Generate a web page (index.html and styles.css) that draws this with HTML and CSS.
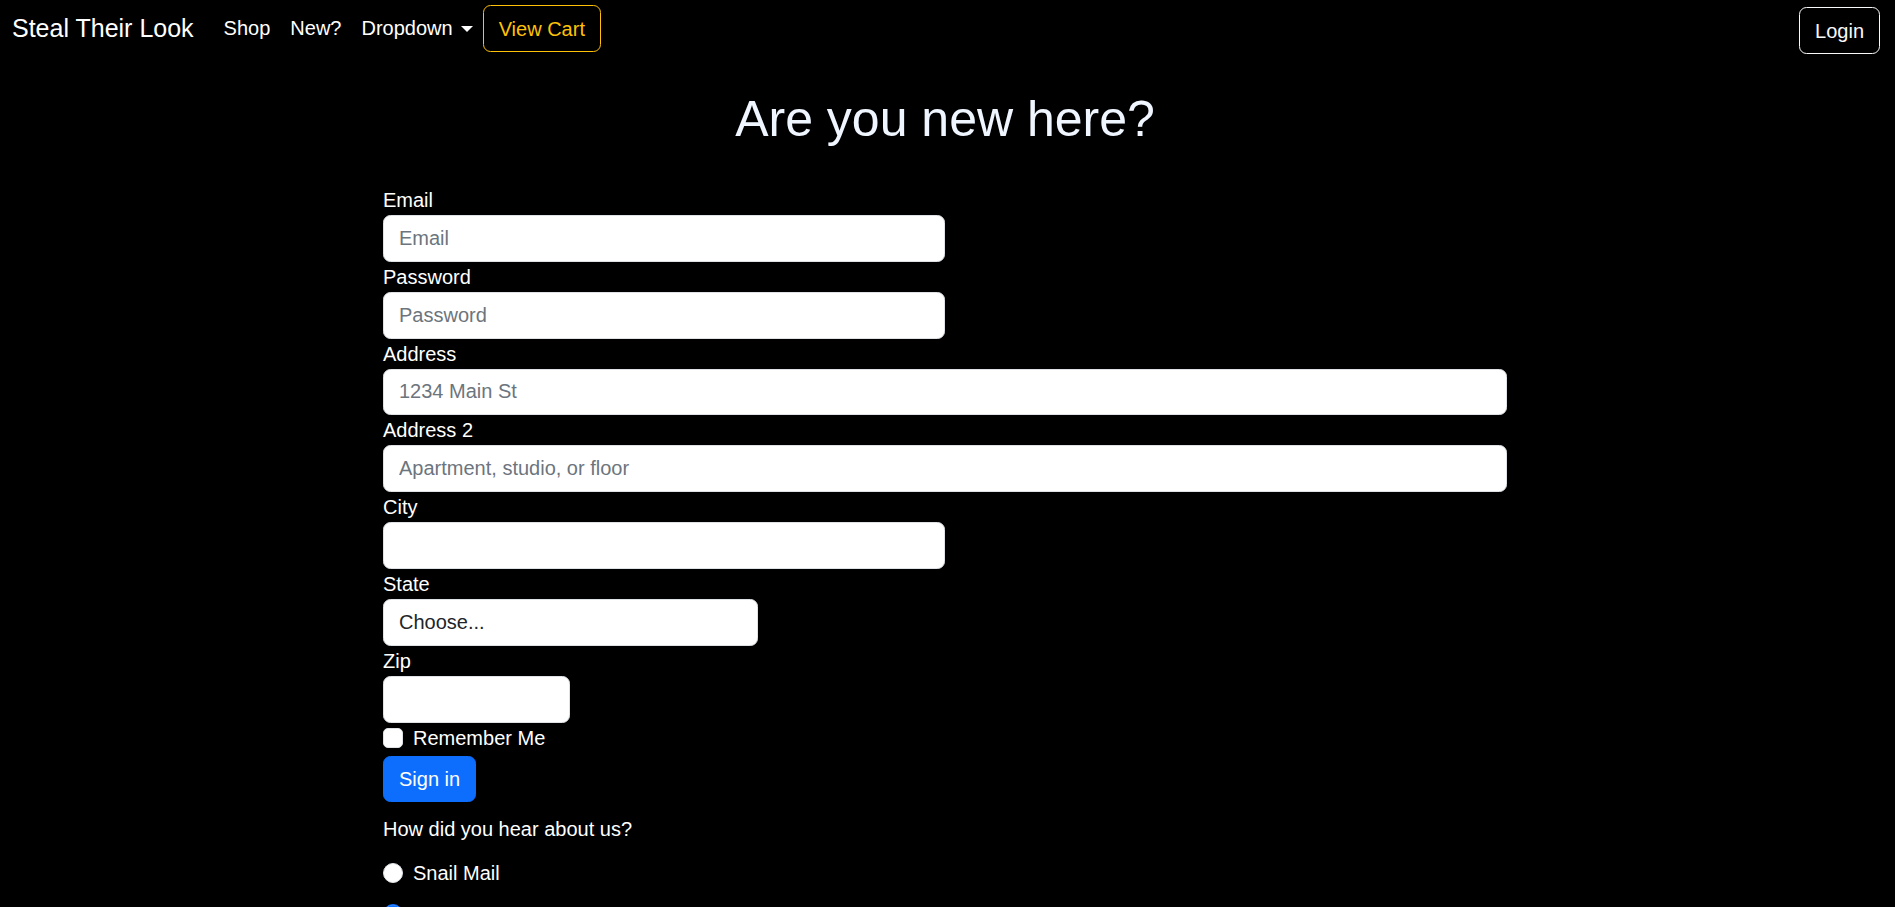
FILE: index.html
```html
<!DOCTYPE html>
<html lang="en">
<head>
<meta charset="utf-8">
<title>Steal Their Look</title>
<link rel="stylesheet" href="styles.css">
</head>
<body>
<nav class="navbar">
  <a class="brand" href="#">Steal Their Look</a>
  <ul class="nav">
    <li><a class="nav-link" href="#">Shop</a></li>
    <li><a class="nav-link" href="#">New?</a></li>
    <li><a class="nav-link dropdown" href="#">Dropdown<span class="caret"></span></a></li>
    <li><button class="btn btn-cart" type="button">View Cart</button></li>
  </ul>
  <button class="btn btn-login" type="button">Login</button>
</nav>

<main class="page">
  <h1 class="title">Are you new here?</h1>
  <form class="form">
    <div class="field w-half">
      <label class="label" for="email">Email</label>
      <input class="control" id="email" type="email" placeholder="Email">
    </div>
    <div class="field w-half">
      <label class="label" for="pw">Password</label>
      <input class="control" id="pw" type="password" placeholder="Password">
    </div>
    <div class="field w-full">
      <label class="label" for="addr">Address</label>
      <input class="control" id="addr" type="text" placeholder="1234 Main St">
    </div>
    <div class="field w-full">
      <label class="label" for="addr2">Address 2</label>
      <input class="control" id="addr2" type="text" placeholder="Apartment, studio, or floor">
    </div>
    <div class="field w-half">
      <label class="label" for="city">City</label>
      <input class="control" id="city" type="text">
    </div>
    <div class="field w-third">
      <label class="label" for="state">State</label>
      <div class="control select" id="state">Choose...</div>
    </div>
    <div class="field w-sixth">
      <label class="label" for="zip">Zip</label>
      <input class="control" id="zip" type="text">
    </div>
    <div class="check">
      <span class="box"></span>
      <span class="check-label">Remember Me</span>
    </div>
    <button class="btn btn-primary" type="button">Sign in</button>
    <p class="question">How did you hear about us?</p>
    <div class="check radio-row">
      <span class="radio"></span>
      <span class="check-label">Snail Mail</span>
    </div>
    <div class="check radio-row">
      <span class="radio checked"></span>
      <span class="check-label below">Social Media</span>
    </div>
  </form>
</main>
</body>
</html>
```

FILE: styles.css
```css
* { box-sizing: border-box; }

html, body {
  margin: 0;
  padding: 0;
  background: #000;
  color: #fff;
  font-family: "Liberation Sans", Arial, sans-serif;
  font-size: 20px;
  line-height: 1.5;
  overflow: hidden;
}

a { color: inherit; text-decoration: none; }

.navbar {
  display: flex;
  align-items: flex-start;
  padding: 5px 15px 0 15px;
  height: 60px;
}

.brand {
  font-size: 25px;
  line-height: 37.5px;
  margin-top: 5px;
  margin-right: 20px;
  margin-left: -3px;
  white-space: nowrap;
}

.nav {
  display: flex;
  align-items: center;
  list-style: none;
  margin: 0;
  padding: 0;
  flex: 1;
}

.nav-link {
  display: flex;
  align-items: center;
  padding: 0 10px;
  line-height: 47px;
}

.caret {
  display: inline-block;
  margin-left: 8px;
  width: 0;
  height: 0;
  border-top: 6px solid #fff;
  border-left: 6px solid transparent;
  border-right: 6px solid transparent;
}

.btn {
  font-family: inherit;
  font-size: 20px;
  line-height: 30px;
  padding: 7.5px 15px;
  border-radius: 7.5px;
  border: 1.25px solid transparent;
  background: transparent;
  cursor: pointer;
  height: 47px;
}

.btn-cart {
  margin-left: 0;
  color: #ffc107;
  border-color: #ffc107;
}

.btn-login {
  margin-top: 2px;
  color: #f8f9fa;
  border-color: #f8f9fa;
}

.page {
  padding-right: 5px;
}

.title {
  margin: 29px 0 36px;
  font-size: 50px;
  font-weight: 400;
  line-height: 60px;
  text-align: center;
  color: #f0f6ff;
}

.form {
  width: 1124px;
  margin: 0 auto;
  display: flex;
  flex-direction: column;
  align-items: flex-start;
}

.field {
  display: flex;
  flex-direction: column;
}

.w-full { width: 1124px; }
.w-half { width: 562px; }
.w-third { width: 375px; }
.w-sixth { width: 187px; }

.label {
  line-height: 30px;
  height: 30px;
}

.control {
  display: block;
  width: 100%;
  height: 46.8px;
  padding: 0 15px;
  font-family: inherit;
  font-size: 20px;
  color: #212529;
  background: #fff;
  border: 1.25px solid #dee2e6;
  border-radius: 7.5px;
  outline: none;
}

.control::placeholder {
  color: #6c757d;
}

.select {
  line-height: 44px;
}

.check {
  display: flex;
  align-items: flex-start;
  height: 30px;
  margin-top: 0;
  margin-bottom: 3px;
}

.box, .radio {
  width: 20px;
  height: 20px;
  margin-top: 5px;
  margin-right: 10px;
  background: #fff;
  border: 1.25px solid #dee2e6;
  flex: none;
}

.box { border-radius: 5px; }
.radio { border-radius: 50%; }
.radio.checked {
  background: #0d6efd;
  border-color: #0d6efd;
  box-shadow: inset 0 0 0 5px #0d6efd, inset 0 0 0 20px #fff;
}

.check-label {
  line-height: 30px;
}

.check-label.below {
  padding-top: 6px;
}

.btn-primary {
  color: #fff;
  background: #0d6efd;
  border-color: #0d6efd;
  height: 46px;
}

.question {
  margin: 12px 0 14px;
  line-height: 30px;
}

.radio-row {
  margin-bottom: 11px;
}
```
